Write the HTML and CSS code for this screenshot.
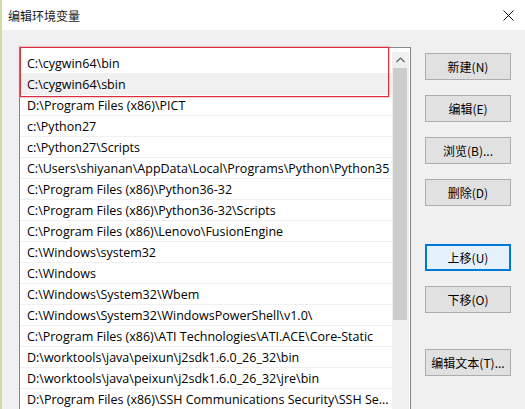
FILE: index.html
```html
<!DOCTYPE html>
<html lang="zh-CN">
<head>
<meta charset="utf-8">
<title>编辑环境变量</title>
<link rel="stylesheet" href="styles.css">
</head>
<body>
<div class="window">
  <div class="titlebar">
    <span class="title">编辑环境变量</span>
    <svg class="close" width="11" height="11" viewBox="0 0 11 11"><path d="M0.5 0.5 L10.5 10.5 M10.5 0.5 L0.5 10.5" stroke="#111" stroke-width="1" fill="none"/></svg>
  </div>
  <div class="content">
    <div class="listbox">
      <div class="list">
        <div class="row">C:\cygwin64\bin</div>
        <div class="row hover">C:\cygwin64\sbin</div>
        <div class="row">D:\Program Files (x86)\PICT</div>
        <div class="row">c:\Python27</div>
        <div class="row">c:\Python27\Scripts</div>
        <div class="row">C:\Users\shiyanan\AppData\Local\Programs\Python\Python35</div>
        <div class="row">C:\Program Files (x86)\Python36-32</div>
        <div class="row">C:\Program Files (x86)\Python36-32\Scripts</div>
        <div class="row">C:\Program Files (x86)\Lenovo\FusionEngine</div>
        <div class="row">C:\Windows\system32</div>
        <div class="row">C:\Windows</div>
        <div class="row">C:\Windows\System32\Wbem</div>
        <div class="row">C:\Windows\System32\WindowsPowerShell\v1.0\</div>
        <div class="row">C:\Program Files (x86)\ATI Technologies\ATI.ACE\Core-Static</div>
        <div class="row">D:\worktools\java\peixun\j2sdk1.6.0_26_32\bin</div>
        <div class="row">D:\worktools\java\peixun\j2sdk1.6.0_26_32\jre\bin</div>
        <div class="row">D:\Program Files (x86)\SSH Communications Security\SSH Se...</div>
      </div>
      <div class="scrollbar">
        <div class="arrow"><svg width="9" height="6" viewBox="0 0 9 6"><path d="M0.5 5 L4.5 1 L8.5 5" stroke="#606060" stroke-width="1.2" fill="none"/></svg></div>
        <div class="thumb"></div>
      </div>
      <div class="mark"></div>
    </div>
    <div class="buttons">
      <div class="btn">新建(N)</div>
      <div class="btn">编辑(E)</div>
      <div class="btn">浏览(B)...</div>
      <div class="btn">删除(D)</div>
      <div class="btn focus group">上移(U)</div>
      <div class="btn">下移(O)</div>
      <div class="btn group2">编辑文本(T)...</div>
    </div>
  </div>
</div>
</body>
</html>
```
FILE: styles.css
```css
html, body {
  margin: 0;
  padding: 0;
  width: 525px;
  height: 409px;
  overflow: hidden;
  background: #f0f0f0;
}
.window {
  width: 525px;
  height: 409px;
  box-sizing: border-box;
  border-left: 2px solid #cfdca8;
  display: flex;
  flex-direction: column;
  overflow: hidden;
  font-family: "Open Sans", "Noto Sans CJK SC", sans-serif;
  font-size: 12px;
  color: #000;
}
.titlebar {
  height: 30px;
  flex: none;
  background: #fff;
  display: flex;
  align-items: center;
  justify-content: space-between;
  padding: 0 11px 0 6px;
}
.title {
  font-family: "Noto Sans CJK SC", sans-serif;
  font-size: 12px;
  color: #1a1a1a;
}
.close { display: block; }
.content {
  flex: 1;
  display: flex;
  align-items: stretch;
  padding: 17px 0 0 17px;
  background: #f0f0f0;
  min-height: 0;
  overflow: hidden;
}
.listbox {
  position: relative;
  width: 392px;
  box-sizing: border-box;
  border: 1px solid #828790;
  border-bottom: none;
  background: #fff;
  display: flex;
  padding: 4px 1px 0 0;
  flex: none;
}
.list {
  flex: 1;
  min-width: 0;
  padding-top: 1px;
  overflow: hidden;
}
.row {
  height: 21px;
  box-sizing: border-box;
  border-bottom: 1px solid #f0f0f0;
  padding-left: 7px;
  line-height: 22px;
  font-size: 12.5px;
  white-space: nowrap;
  overflow: hidden;
}
.row.hover { background: #f0f0f0; }
.scrollbar {
  width: 17px;
  flex: none;
  background: #f0f0f0;
  display: flex;
  flex-direction: column;
}
.arrow {
  height: 16px;
  display: flex;
  align-items: center;
  justify-content: center;
}
.arrow svg { display: block; }
.thumb {
  height: 252px;
  margin: 0 2px 0 1px;
  background: #cdcdcd;
}
.mark {
  position: absolute;
  left: 0;
  top: -1px;
  width: 369px;
  height: 50px;
  box-sizing: border-box;
  border: 1px solid #d9303f;
  box-shadow: 0 0 1px 1px rgba(230, 90, 100, 0.3);
}
.buttons {
  margin-left: 14px;
  padding-top: 6px;
  display: flex;
  flex-direction: column;
  align-items: flex-start;
  gap: 15px;
}
.btn {
  width: 86px;
  height: 27px;
  flex: none;
  box-sizing: border-box;
  border: 1px solid #adadad;
  background: #e1e1e1;
  display: flex;
  align-items: center;
  justify-content: center;
  font-family: "Noto Sans CJK SC", sans-serif;
  font-size: 12px;
}
.btn.focus {
  border: 2px solid #0078d7;
  background: #e5f1fb;
}
.btn.group { margin-top: 23px; }
.btn.group2 { margin-top: 21px; }
```
